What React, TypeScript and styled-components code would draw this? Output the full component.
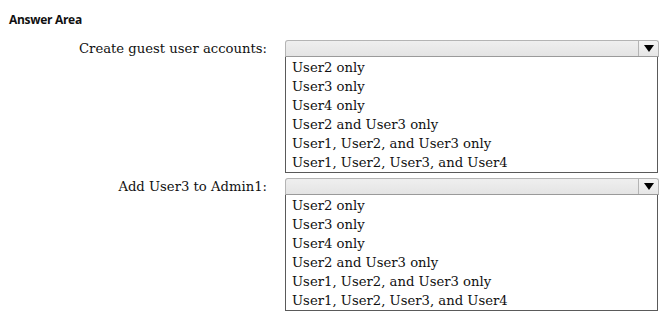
import React from "react";
import styled, { createGlobalStyle } from "styled-components";

const Global = createGlobalStyle`
  html, body { margin: 0; padding: 0; background: #ffffff; }
  body { width: 672px; height: 326px; overflow: hidden; }
`;

const Page = styled.div`
  padding: 12px 0 0 9px;
  display: flex;
  flex-direction: column;
`;

const Heading = styled.div`
  font-family: "Open Sans", "Liberation Sans", sans-serif;
  font-weight: 700;
  font-size: 12px;
  line-height: 16px;
  color: #111;
  letter-spacing: -0.3px;
  margin-bottom: 12px;
`;

const Rows = styled.div`
  display: flex;
  flex-direction: column;
  gap: 5px;
`;

const Row = styled.div`
  display: grid;
  grid-template-columns: 258px 374px;
  column-gap: 18px;
  align-items: start;
`;

const Label = styled.div`
  font-family: "DejaVu Serif", serif;
  font-size: 13.2px;
  line-height: 17px;
  color: #111;
  text-align: right;
`;

const Dropdown = styled.div`
  display: flex;
  flex-direction: column;
  width: 374px;
`;

const Bar = styled.div`
  height: 15px;
  display: flex;
  justify-content: flex-end;
  background: linear-gradient(#efefef, #e4e4e4);
  border: 1px solid #b4b4b4;
  border-bottom-color: #9a9a9a;
  border-radius: 3px 3px 0 0;
`;

const ArrowBtn = styled.div`
  width: 19px;
  display: flex;
  align-items: center;
  justify-content: center;
  border-left: 1px solid #b4b4b4;
  background: linear-gradient(#f4f4f4, #e6e6e6);
  border-radius: 0 3px 0 0;
`;

const List = styled.div`
  border: 1px solid #5a5a5a;
  border-top: none;
  padding: 1px 0 0 6px;
  box-sizing: border-box;
  width: 373px;
`;

const Item = styled.div`
  font-family: "DejaVu Serif", serif;
  font-size: 13.2px;
  line-height: 19px;
  color: #111;
  white-space: nowrap;
`;

const options = [
  "User2 only",
  "User3 only",
  "User4 only",
  "User2 and User3 only",
  "User1, User2, and User3 only",
  "User1, User2, User3, and User4",
];

const questions = ["Create guest user accounts:", "Add User3 to Admin1:"];

const Arrow = () => (
  <svg width="10" height="7" viewBox="0 0 10 7">
    <polygon points="0,0 10,0 5,7" fill="#000" />
  </svg>
);

export default function App() {
  return (
    <>
      <Global />
      <Page>
        <Heading>Answer Area</Heading>
        <Rows>
          {questions.map((q) => (
            <Row key={q}>
              <Label>{q}</Label>
              <Dropdown>
                <Bar>
                  <ArrowBtn>
                    <Arrow />
                  </ArrowBtn>
                </Bar>
                <List>
                  {options.map((o) => (
                    <Item key={o}>{o}</Item>
                  ))}
                </List>
              </Dropdown>
            </Row>
          ))}
        </Rows>
      </Page>
    </>
  );
}
